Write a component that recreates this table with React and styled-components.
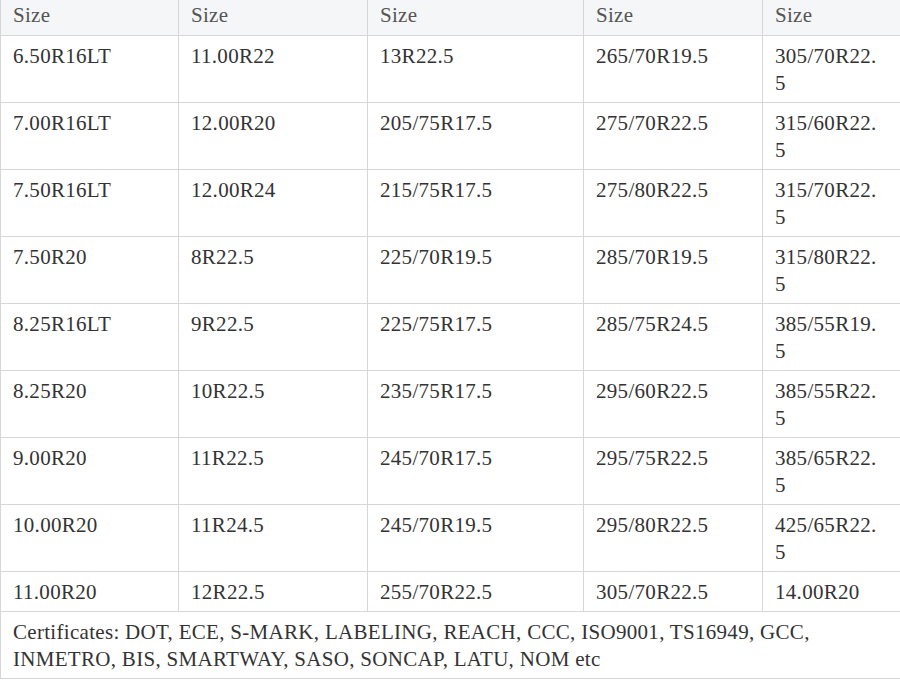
import React from "react";
import styled, { createGlobalStyle } from "styled-components";

const Global = createGlobalStyle`
  html, body { margin: 0; padding: 0; background: #fff; }
  body { font-family: "Liberation Serif", "Times New Roman", serif; }
`;

const Table = styled.table`
  width: 900px;
  border-collapse: collapse;
  table-layout: fixed;
  font-family: "Liberation Serif", "Times New Roman", serif;
  font-size: 21px;
  line-height: 27px;
  letter-spacing: 0.3px;
  color: #333;
`;

const HeadCell = styled.th`
  background: #f5f6f8;
  color: #555;
  font-weight: normal;
  text-align: left;
  padding: 2px 18px 6px 12px;
  border: 1px solid #d6d6d6;
  border-top: none;
`;

const Cell = styled.td`
  padding: 7px 18px 5px 12px;
  border: 1px solid #d6d6d6;
  vertical-align: top;
  overflow-wrap: anywhere;
  word-break: break-all;
`;

const NoteCell = styled(Cell)`
  word-break: normal;
  overflow-wrap: normal;
`;

const widths = [178, 189, 216, 179, 138];

const rows = [
  ["6.50R16LT", "11.00R22", "13R22.5", "265/70R19.5", "305/70R22.5"],
  ["7.00R16LT", "12.00R20", "205/75R17.5", "275/70R22.5", "315/60R22.5"],
  ["7.50R16LT", "12.00R24", "215/75R17.5", "275/80R22.5", "315/70R22.5"],
  ["7.50R20", "8R22.5", "225/70R19.5", "285/70R19.5", "315/80R22.5"],
  ["8.25R16LT", "9R22.5", "225/75R17.5", "285/75R24.5", "385/55R19.5"],
  ["8.25R20", "10R22.5", "235/75R17.5", "295/60R22.5", "385/55R22.5"],
  ["9.00R20", "11R22.5", "245/70R17.5", "295/75R22.5", "385/65R22.5"],
  ["10.00R20", "11R24.5", "245/70R19.5", "295/80R22.5", "425/65R22.5"],
  ["11.00R20", "12R22.5", "255/70R22.5", "305/70R22.5", "14.00R20"],
];

export default function App() {
  return (
    <>
      <Global />
      <Table>
        <colgroup>
          {widths.map((w, i) => (
            <col key={i} style={{ width: w }} />
          ))}
        </colgroup>
        <thead>
          <tr>
            {widths.map((_, i) => (
              <HeadCell key={i}>Size</HeadCell>
            ))}
          </tr>
        </thead>
        <tbody>
          {rows.map((r, i) => (
            <tr key={i}>
              {r.map((c, j) => (
                <Cell key={j}>{c}</Cell>
              ))}
            </tr>
          ))}
          <tr>
            <NoteCell colSpan={5}>
              Certificates: DOT, ECE, S-MARK, LABELING, REACH, CCC, ISO9001, TS16949, GCC, INMETRO, BIS, SMARTWAY, SASO, SONCAP, LATU, NOM etc
            </NoteCell>
          </tr>
        </tbody>
      </Table>
    </>
  );
}
